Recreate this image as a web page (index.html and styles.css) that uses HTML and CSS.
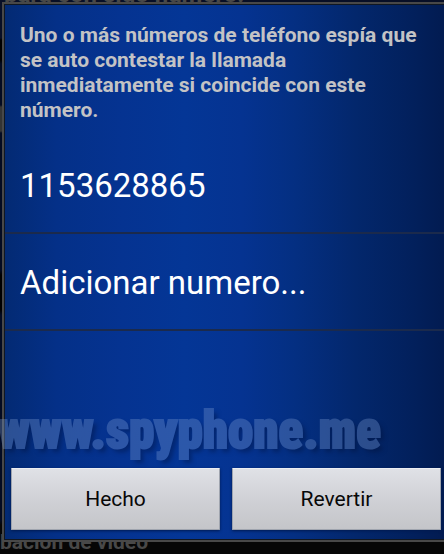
FILE: index.html
```
<!DOCTYPE html>
<html lang="es">
<head>
<meta charset="utf-8">
<meta name="viewport" content="width=device-width, initial-scale=1">
<title>Números de teléfono</title>
<link rel="stylesheet" href="styles.css">
</head>
<body>
<div class="backdrop" aria-hidden="true">
  <p class="backdrop-top">para con sido numero.</p>
  <p class="backdrop-bottom">bación de video</p>
</div>
<main class="dialog">
  <h1 class="title">Uno o más números de teléfono espía que se auto contestar la llamada inmediatamente si coincide con este número.</h1>
  <ul class="numbers">
    <li><button class="row" type="button">1153628865</button></li>
    <li><button class="row" type="button">Adicionar numero...</button></li>
  </ul>
  <div class="actions">
    <button class="action" type="button">Hecho</button>
    <button class="action" type="button">Revertir</button>
  </div>
</main>
<div class="watermark">www.spyphone.me</div>
</body>
</html>
```
FILE: styles.css
```
* {
  box-sizing: border-box;
}

body {
  margin: 0;
  min-height: 100vh;
  display: flex;
  position: relative;
  overflow: hidden;
  background: #060606;
  font-family: Roboto, "Liberation Sans", sans-serif;
}

.backdrop {
  position: absolute;
  inset: 0;
  overflow: hidden;
  background: linear-gradient(#080f26 0 38px, #000 40px 60px, #030b22 64px 105px, #343434 107px 131px, #030b22 133px 270px, #000 275px 310px, #030b22 315px 520px, #060606 525px);
  color: #484848;
  font-size: 21px;
  font-weight: 700;
  line-height: 24px;
}

.backdrop p {
  position: absolute;
  margin: 0;
  white-space: nowrap;
}

.backdrop-top {
  left: 4px;
  top: -18px;
  font-size: 24px;
}

.backdrop-bottom {
  left: 0;
  bottom: 0;
}

.dialog {
  flex: 1;
  position: relative;
  display: flex;
  flex-direction: column;
  margin: 2px 0 12px 2px;
  border: 2px solid #484848;
  border-right: 0;
  background: linear-gradient(90deg, #032a73 0%, #043088 12%, #053391 27%, #043696 41%, #053391 54%, #042f82 66%, #03276c 80%, #02205c 93%, #021b51 100%);
  box-shadow: inset 1px 1px #101722, inset 0 -1px #101722;
}

.title {
  margin: 0;
  padding: 19px 24px 0 16px;
  color: #c3c3c5;
  font-size: 21px;
  font-weight: 700;
  line-height: 25px;
}

.numbers {
  margin: 14px 0 0 1px;
  padding: 0;
  list-style: none;
}

.row {
  display: block;
  width: 100%;
  height: 97px;
  padding: 3px 15px 0;
  border: 0;
  border-bottom: 2px solid #1b2a4c;
  background: none;
  color: #fff;
  font: 33px/40px Roboto, "Liberation Sans", sans-serif;
  text-align: left;
}

.actions {
  display: flex;
  gap: 12px;
  margin-top: auto;
  padding: 0 3px 10px 7px;
}

.action {
  flex: 1;
  height: 62px;
  padding: 0;
  border: 1px solid #9fa4ae;
  border-top-color: #eceef2;
  border-radius: 1px;
  background: linear-gradient(#dfe1e6, #d0d1d6 50%, #c4c5c9);
  box-shadow: 0 1px 3px #001a50;
  color: #080808;
  font: 21px/28px Roboto, "Liberation Sans", sans-serif;
}

.watermark {
  position: absolute;
  left: -2px;
  top: 400px;
  color: #7898d0;
  opacity: 0.35;
  font: 900 51px/62px Impact, "Roboto Condensed", "Liberation Sans Narrow", sans-serif;
  -webkit-text-stroke: 2px #7898d0;
  text-shadow: 4px 4px 4px #000c30;
  white-space: nowrap;
  pointer-events: none;
}
```
